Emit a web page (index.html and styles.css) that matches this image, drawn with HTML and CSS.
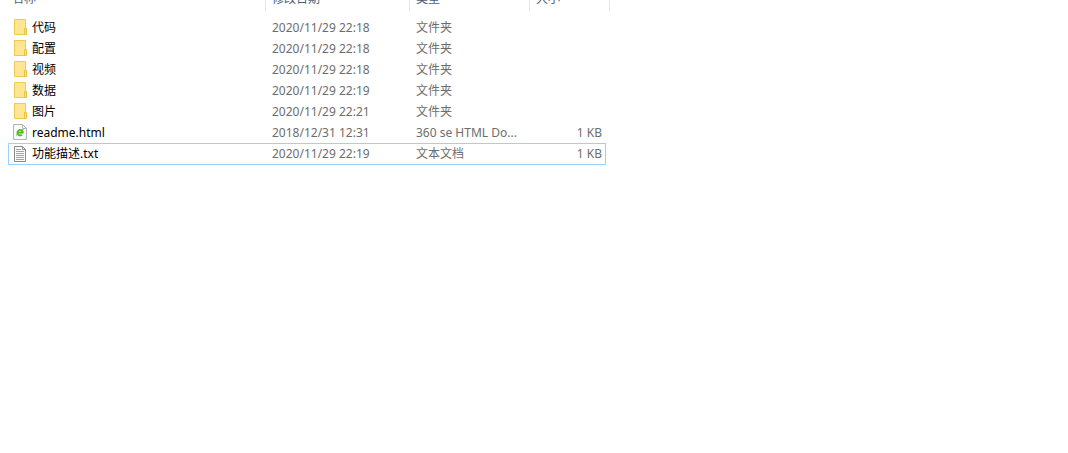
FILE: index.html
```html
<!DOCTYPE html>
<html lang="zh-CN">
<head>
  <meta charset="UTF-8">
  <meta name="viewport" content="width=device-width, initial-scale=1.0">
  <title>文件列表</title>
  <link rel="stylesheet" href="styles.css">
</head>
<body>
  <svg class="sprite" aria-hidden="true">
    <symbol id="folder" viewBox="0 0 16 16">
      <path d="M2.5.5h11v15h-11z" fill="#ffe594" stroke="#edcb50"/>
      <path d="M12.5 9.5h2v6h-2z" fill="#ffe082" stroke="#e8c340"/>
    </symbol>
    <symbol id="html" viewBox="0 0 16 16">
      <path d="M1.5.5h9l4 4v11h-13z" fill="#fafafa" stroke="#b4b4b4"/>
      <path d="M10.5.5v4h4" fill="none" stroke="#b4b4b4"/>
      <path d="M5.500 8.700h5.300a2.700 2.700 0 1 0-.9 2" fill="none" stroke="#48bd10" stroke-width="1.800"/>
      <path d="M4.500 11.800c.5-3.500 3-6.500 7.300-6.300" fill="none" stroke="#6dcf2f" stroke-width=".8"/>
    </symbol>
    <symbol id="text" viewBox="0 0 16 16">
      <path d="M2.5.5h8l3 3v12h-11z" fill="#fafafa" stroke="#8a8a8a"/>
      <path d="M10.5.5v3h3" fill="none" stroke="#8a8a8a"/>
      <path d="M4 3.5h5M4 5.500h8M4 7.500h8M4 9.500h8M4 11.500h8M4 13.500h8" stroke="#a3a3a3"/>
    </symbol>
  </svg>
  <table class="files">
    <colgroup>
      <col class="col-name">
      <col class="col-date">
      <col class="col-type">
      <col class="col-size">
      <col class="col-end">
    </colgroup>
    <thead>
      <tr>
        <th>名称</th>
        <th>修改日期</th>
        <th>类型</th>
        <th colspan="2">大小</th>
      </tr>
    </thead>
    <tbody>
      <tr>
        <td class="name"><svg class="icon"><use href="#folder"/></svg>代码</td>
        <td>2020/11/29 22:18</td>
        <td>文件夹</td>
        <td class="size"></td>
      </tr>
      <tr>
        <td class="name"><svg class="icon"><use href="#folder"/></svg>配置</td>
        <td>2020/11/29 22:18</td>
        <td>文件夹</td>
        <td class="size"></td>
      </tr>
      <tr>
        <td class="name"><svg class="icon"><use href="#folder"/></svg>视频</td>
        <td>2020/11/29 22:18</td>
        <td>文件夹</td>
        <td class="size"></td>
      </tr>
      <tr>
        <td class="name"><svg class="icon"><use href="#folder"/></svg>数据</td>
        <td>2020/11/29 22:19</td>
        <td>文件夹</td>
        <td class="size"></td>
      </tr>
      <tr>
        <td class="name"><svg class="icon"><use href="#folder"/></svg>图片</td>
        <td>2020/11/29 22:21</td>
        <td>文件夹</td>
        <td class="size"></td>
      </tr>
      <tr>
        <td class="name"><svg class="icon"><use href="#html"/></svg>readme.html</td>
        <td>2018/12/31 12:31</td>
        <td>360 se HTML Do...</td>
        <td class="size">1 KB</td>
      </tr>
      <tr class="focused">
        <td class="name"><svg class="icon"><use href="#text"/></svg>功能描述.txt</td>
        <td>2020/11/29 22:19</td>
        <td>文本文档</td>
        <td class="size">1 KB</td>
      </tr>
    </tbody>
  </table>
</body>
</html>
```
FILE: styles.css
```css
* {
  margin: 0;
  padding: 0;
  box-sizing: border-box;
}
body {
  padding: 0 8px;
  background: #fff;
  color: #6d6d6d;
  font-family: "Noto Sans", "Noto Sans CJK SC", sans-serif;
  font-size: 12px;
  line-height: 20px;
  overflow: hidden;
}
.sprite {
  display: none;
}
/* header is scrolled partly out of view */
.files {
  margin-top: -14px;
  table-layout: fixed;
  width: 602px;
  border-spacing: 0;
}
.col-name {
  width: 258px;
}
.col-date {
  width: 144px;
}
.col-type {
  width: 120px;
}
.col-size {
  width: 76px;
}
.col-end {
  width: 4px;
}
th {
  height: 25px;
  padding-left: 6px;
  border-right: 1px solid #e5e5e5;
  color: #4c607a;
  font-weight: normal;
  text-align: left;
}
th:first-child {
  padding-left: 4px;
}
tbody::before {
  content: "";
  display: block;
  height: 6px;
}
td {
  height: 21px;
  padding-left: 6px;
  white-space: nowrap;
}
.name {
  padding-left: 4px;
  color: #000;
}
.icon {
  width: 16px;
  height: 16px;
  margin: 0 4px 2px 0;
  vertical-align: middle;
}
.size {
  padding-right: 4px;
  text-align: right;
}
.focused td {
  height: 22px;
  border: solid #99d1ff;
  border-width: 1px 0;
}
.focused .name {
  padding-left: 3px;
  border-left-width: 1px;
}
.focused .size {
  padding-right: 3px;
  border-right-width: 1px;
}
```
